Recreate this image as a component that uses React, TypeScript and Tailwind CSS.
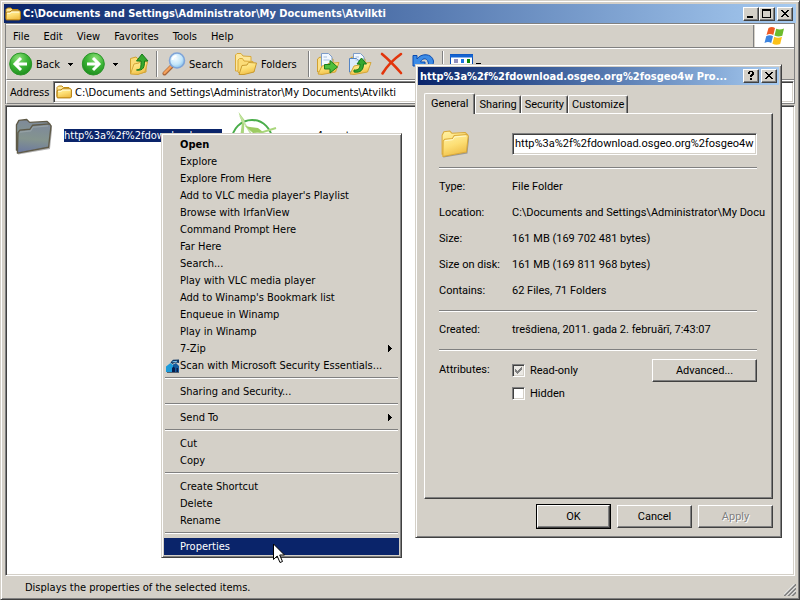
import { ReactNode } from 'react';
import { clsx } from 'clsx';

const tahoma = "font-['DejaVu_Sans_Condensed','Noto_Sans',sans-serif]";
const msSans = "font-[Roboto,'Liberation_Sans',sans-serif]";

const windowFrame =
  'border border-[#d4d0c8] border-r-[#404040] border-b-[#404040] shadow-[inset_1px_1px_0_#fff,inset_-1px_-1px_0_#808080] bg-[#d4d0c8]';
const raised =
  'border border-white border-r-[#404040] border-b-[#404040] shadow-[inset_-1px_-1px_0_#808080] bg-[#d4d0c8]';
const sunken =
  'border border-[#808080] border-r-white border-b-white shadow-[inset_1px_1px_0_#404040,inset_-1px_-1px_0_#d4d0c8]';

const menus = ['File', 'Edit', 'View', 'Favorites', 'Tools', 'Help'];

interface MenuEntry {
  label: string;
  bold?: boolean;
  submenu?: boolean;
  shield?: boolean;
  active?: boolean;
}

const contextGroups: MenuEntry[][] = [
  [
    { label: 'Open', bold: true },
    { label: 'Explore' },
    { label: 'Explore From Here' },
    { label: "Add to VLC media player's Playlist" },
    { label: 'Browse with IrfanView' },
    { label: 'Command Prompt Here' },
    { label: 'Far Here' },
    { label: 'Search...' },
    { label: 'Play with VLC media player' },
    { label: "Add to Winamp's Bookmark list" },
    { label: 'Enqueue in Winamp' },
    { label: 'Play in Winamp' },
    { label: '7-Zip', submenu: true },
    { label: 'Scan with Microsoft Security Essentials...', shield: true },
  ],
  [{ label: 'Sharing and Security...' }],
  [{ label: 'Send To', submenu: true }],
  [{ label: 'Cut' }, { label: 'Copy' }],
  [{ label: 'Create Shortcut' }, { label: 'Delete' }, { label: 'Rename' }],
  [{ label: 'Properties', active: true }],
];

const details = [
  ['Type:', 'File Folder'],
  ['Location:', 'C:\\Documents and Settings\\Administrator\\My Docu'],
  ['Size:', '161 MB (169 702 481 bytes)'],
  ['Size on disk:', '161 MB (169 811 968 bytes)'],
  ['Contains:', '62 Files, 71 Folders'],
];

/* ---------- icons ---------- */

function Gradients() {
  return (
    <svg className="absolute size-0" aria-hidden="true">
      <defs>
        <linearGradient id="gold" x1="0" y1="0" x2="0.4" y2="1">
          <stop offset="0" stopColor="#fff3a8" />
          <stop offset="0.55" stopColor="#fddf75" />
          <stop offset="1" stopColor="#f0c04a" />
        </linearGradient>
        <linearGradient id="dim" x1="0.2" y1="0" x2="0.1" y2="1">
          <stop offset="0" stopColor="#7e8a9a" />
          <stop offset="0.5" stopColor="#84948e" />
          <stop offset="1" stopColor="#6b78a0" />
        </linearGradient>
        <radialGradient id="green" cx="0.4" cy="0.25" r="0.8">
          <stop offset="0" stopColor="#8fe07a" />
          <stop offset="0.5" stopColor="#3db536" />
          <stop offset="1" stopColor="#1b8a1c" />
        </radialGradient>
        <radialGradient id="lens" cx="0.4" cy="0.35" r="0.7">
          <stop offset="0" stopColor="#f4fcff" />
          <stop offset="0.6" stopColor="#c3e6fa" />
          <stop offset="1" stopColor="#7fbdea" />
        </radialGradient>
      </defs>
    </svg>
  );
}

function SmallFolder() {
  return (
    <svg width="16" height="16" viewBox="0 0 16 16" className="shrink-0">
      <path d="M1 12.5V3.5L2.5 2H6l1.5 1.5H13l1 1V6" fill="#ffe99a" stroke="#c08a10" />
      <path d="M1 13.5 1.2 7l1-1H5l1-1.2h8.5l.9 1V13l-.9.9H1.8z" fill="url(#gold)" stroke="#b37a08" />
      <path d="M2.2 7.3h3.2l1-1.2h7.8" fill="none" stroke="#fffbe0" />
    </svg>
  );
}

// large folder, used both for the dialog and for the dimmed selected item
function LargeFolder({ size, dim = false, className }: { size: number; dim?: boolean; className?: string }) {
  const fill = dim ? 'url(#dim)' : 'url(#gold)';
  const line = dim ? '#5f5a48' : '#d9a93a';
  return (
    <svg width={size} height={size} viewBox="0 0 38 38" className={clsx('shrink-0', className)}>
      <path d="M3 36.500 35 31 37.500 8" fill="none" stroke="#555" strokeOpacity="0.45" strokeWidth="2" />
      <path
        d="M1.500 33V7L4 2.500 12 1.500l3 3L33 3.500 35.500 6v6z"
        fill={fill}
        stroke={line}
        strokeWidth="1.4"
        strokeLinejoin="round"
      />
      <path
        d="M2.500 36 3 15l2-2.500 10.500-1 2.500-4L35.500 6 37 8l-2.500 22z"
        fill={fill}
        stroke={line}
        strokeWidth="1.4"
        strokeLinejoin="round"
      />
      <path d="M5 14.500 16 13.200l2.500-3.700 15.500-1.400" fill="none" stroke={dim ? '#95a1a5' : '#fffbd2'} strokeWidth="1.200" />
    </svg>
  );
}

function RoundArrow({ flip = false }: { flip?: boolean }) {
  return (
    <svg width="24" height="24" viewBox="0 0 24 24" className={clsx('shrink-0', flip && '-scale-x-100')}>
      <circle cx="11.7" cy="12" r="11" fill="url(#green)" stroke="#2a9428" />
      <path d="M12 6 6 12l6 6M7 12h11" fill="none" stroke="#fff" strokeWidth="3" />
    </svg>
  );
}

function UpFolder() {
  return (
    <svg width="22" height="24" viewBox="0 0 22 24" className="shrink-0">
      <path d="M1.5 21V6.5L7 5l2 2 8 1v12l-9 2z" fill="#fbdc78" stroke="#d0a030" />
      <path d="M1.5 22 5 12l5-1 1-2 7.5 1L16 20l-7 2.5z" fill="url(#gold)" stroke="#d3a63a" />
      <path d="M7.5 18c5 0 4.5-4 4.5-9H7.5L13 2l6 7h-3.5c0 6-1 10-8 9z" fill="#35a82f" stroke="#157a18" />
    </svg>
  );
}

function Magnifier() {
  return (
    <svg width="24" height="24" viewBox="0 0 24 24" className="shrink-0">
      <path d="m10 14-7.5 7.5" stroke="#a8653a" strokeWidth="4" strokeLinecap="round" />
      <path d="m9.5 14-7 7" stroke="#f5a25c" strokeWidth="2.4" strokeLinecap="round" />
      <path d="m11 12-2 2" stroke="#7793c6" strokeWidth="3" />
      <circle cx="15" cy="8.5" r="7.5" fill="url(#lens)" stroke="#7fa4d8" strokeWidth="1.6" />
      <path d="M10.5 8a4.5 4.5 0 0 1 4-4" fill="none" stroke="#fff" strokeWidth="2" />
    </svg>
  );
}

function FoldersIcon() {
  return (
    <svg width="24" height="24" viewBox="0 0 24 24" className="shrink-0">
      <path d="M1.5 19V3L3 1.5h4L9 4l8 .5V15l-13 4z" fill="#fde79a" stroke="#d9a93a" />
      <path d="M4 20V8l1.5-1.5h3L10 9l9 .5V19l-13 3z" fill="#fbdc78" stroke="#d9a93a" />
      <path d="m5 22.500 3-9 5-.5 1.500-2.500 8 .5-2.500 9L10 22.500z" fill="url(#gold)" stroke="#c99a2e" />
    </svg>
  );
}

function TransferFolder({ copy = false }: { copy?: boolean }) {
  return (
    <svg width="24" height="24" viewBox="0 0 24 24" className="shrink-0">
      <path d="M1.5 20V7L4 5l3 1 10 1v11z" fill="#fbe08a" stroke="#d0a030" />
      <path d="M5.5 18V1.5h7L16 5v13z" fill="#f2f8ff" stroke="#7d9cc8" />
      {copy && <path d="M1.5 20V6.5h7L11 9v11z" fill="#dcebfb" stroke="#5484c4" />}
      <path d="M7.5 5H11M7.5 8h6" stroke="#a7bfe0" />
      <path d="m2 22 4-8 5-1 1-1.5 11-1L19.5 20 6 22.5z" fill="url(#gold)" stroke="#d3a63a" />
      {copy ? (
        <path d="M6 18c5 .5 6-2 6-6H9l4.5-6 5 6h-3c0 6-3 9-9.500 8z" fill="#35a82f" stroke="#157a18" />
      ) : (
        <path d="M8.5 12.5H14v-4l7.5 6.5-7.5 6v-4H8.5z" fill="#4fbf3c" stroke="#1c7d1c" />
      )}
    </svg>
  );
}

function DeleteIcon() {
  return (
    <svg width="24" height="24" viewBox="0 0 24 24" className="shrink-0">
      <path d="M2 2c6 5 12 11 19 19M21 2C14 7 7 14 2.5 21.5" fill="none" stroke="#e2350c" strokeWidth="2.6" strokeLinecap="round" />
    </svg>
  );
}

function UndoIcon() {
  return (
    <svg width="24" height="24" viewBox="0 0 24 24" className="shrink-0">
      <path d="M1 3.500h4V7C9 1 20 1 21.500 9c0 6-4 10-10 12 3-3 5-5 5-9C16 6 11 5 8.500 10H13v4H1z" fill="#3b8be6" stroke="#0a4bb0" />
    </svg>
  );
}

function ViewsIcon() {
  return (
    <svg width="24" height="24" viewBox="0 0 24 24" className="shrink-0">
      <rect x="0.5" y="2.5" width="22" height="19" fill="#fff" stroke="#0b50b8" />
      <path d="M0 4h23" stroke="#1464d2" strokeWidth="3" />
      <path d="M4 9h4M4 16h4" stroke="#9292c0" strokeWidth="4" />
      <path d="M11 9h3M11 16h3" stroke="#1c74e0" strokeWidth="4" />
      <path d="M17 9h3M17 16h3" stroke="#0a8a0a" strokeWidth="4" />
    </svg>
  );
}

function WindowsFlag() {
  return (
    <svg width="22" height="20" viewBox="0 0 22 20">
      <path d="M4.5 2C7 .5 9 .8 11 2L9.3 9C7 7.8 5 7.8 2.500 9z" fill="#ee5a24" />
      <path d="M12.2 2.800c2.500 1.200 5 1 7.800-.3L18.300 9.700c-2.800 1.200-5 1-7.800-.2z" fill="#6cbb2c" />
      <path d="M2.2 10.200C4.700 9 6.800 9 9 10.200L7.200 17C5 15.800 3 15.800.5 17z" fill="#3c84e0" />
      <path d="M10.2 10.800c2.600 1.200 5 1.200 7.800 0L16.200 18c-2.700 1.200-5.200 1-7.800-.2z" fill="#fbc11a" />
    </svg>
  );
}

function ShieldHouse() {
  return (
    <svg width="14" height="14" viewBox="0 0 14 14">
      <path d="M0 13V7.500L4.500 4 7 6v7z" fill="#1d9ad8" />
      <path d="M7 13V5.500L10 4l3 3v6z" fill="#145a9c" />
      <path d="M4.500 3.500 7 .8 13 .5V4L9 3.500 6.500 5z" fill="#0f3765" />
      <path d="M6.500 2.800 11 2.300" stroke="#7cc4ee" />
      <path d="M6 13V9l1.500-1.500L9 9v4zM10.500 13V9h1.500v4z" fill="#0a1c4a" />
      <path d="M1 13.500h12" stroke="#55616e" />
    </svg>
  );
}

// green compass rose of the installer file
function OsgeoLogo() {
  return (
    <svg width="48" height="48" viewBox="0 0 48 48" className="shrink-0">
      <circle cx="21" cy="29" r="20" fill="none" stroke="#4aad4a" strokeWidth="2" />
      <path d="M7.500 1 13.500 9l-1 20L8 34l3-22z" fill="#a9d67c" />
      <path d="M9 5 22 26" stroke="#c3e3a2" strokeWidth="1.5" />
      <path d="m14 15 5 1 8 1 5 4-10 1z" fill="#9ccb62" />
      <path d="M45 17 22 24" stroke="#a9d67c" strokeWidth="2" />
    </svg>
  );
}

function DownArrow() {
  return (
    <svg width="5" height="3" viewBox="0 0 5 3" className="shrink-0" shapeRendering="crispEdges">
      <path d="M0 0h5v1H4v1H3v1H2V2H1V1H0z" />
    </svg>
  );
}

function Pointer() {
  return (
    <svg width="12" height="21" viewBox="0 0 12 21">
      <path d="M.5 1v15.5L4.200 13 7 19.500l2.500-1L6.700 12H11.500z" fill="#fff" stroke="#000" />
    </svg>
  );
}

/* ---------- small controls ---------- */

function CaptionButton({ label, children }: { label: string; children: ReactNode }) {
  return (
    <button aria-label={label} className={clsx('flex h-3.5 w-4 items-center justify-center', raised)}>
      <svg width="12" height="10" viewBox="0 0 12 10" shapeRendering="crispEdges" className="shrink-0">
        {children}
      </svg>
    </button>
  );
}

const closeGlyph = <path d="M2 1h2v1h1v1h2V2h1V1h2v1H9v1H8v1H7v1h1v1h1v1h1v1H8V7H7V6H5v1H4v1H2V7h1V6h1V5h1V4H4V3H3V2H2z" />;

function Groove({ className }: { className?: string }) {
  return <div className={clsx('h-0.5 border-t border-b border-t-[#808080] border-b-white', className)} />;
}

function ToolSeparator({ className }: { className?: string }) {
  return <div className={clsx('h-[26px] w-0.5 shrink-0 border-l border-r border-l-[#808080] border-r-white', className)} />;
}

function ToolButton({ className, children, label }: { className: string; children: ReactNode; label: string }) {
  return (
    <button aria-label={label} className={clsx('flex shrink-0 items-center', className)}>
      {children}
    </button>
  );
}

function DialogButton({ children, className, disabled }: { children: ReactNode; className?: string; disabled?: boolean }) {
  return (
    <button
      disabled={disabled}
      className={clsx(
        'flex h-[23px] items-center justify-center',
        raised,
        disabled && 'text-[#808080] [text-shadow:1px_1px_0_#fff]',
        className
      )}
    >
      {children}
    </button>
  );
}

/* ---------- overlays ---------- */

function ContextMenu() {
  return (
    <div role="menu" className={clsx('absolute top-[132px] left-40 w-[241px] p-0.5', windowFrame)}>
      {contextGroups.map((group, i) => (
        <div key={group[0].label}>
          {i > 0 && <Groove className="mx-px mt-[3px] mb-1" />}
          {group.map((item) => (
            <button
              key={item.label}
              role="menuitem"
              className={clsx(
                'relative flex h-[17px] w-full items-center pr-[7px] pl-4 text-left whitespace-nowrap',
                item.bold && 'font-bold',
                item.active && 'bg-[#0a246a] text-white'
              )}
            >
              {item.shield && (
                <span className="absolute top-0.5 left-0.5">
                  <ShieldHouse />
                </span>
              )}
              {item.label}
              {item.submenu && (
                <svg width="4" height="7" viewBox="0 0 4 7" className="ml-auto" shapeRendering="crispEdges">
                  <path d="M0 0h1v1h1v1h1v1h1v1H3v1H2v1H1v1H0z" />
                </svg>
              )}
            </button>
          ))}
        </div>
      ))}
    </div>
  );
}

function Tab({ label, selected = false }: { label: string; selected?: boolean }) {
  return (
    <button
      role="tab"
      aria-selected={selected}
      className={clsx(
        'rounded-t-[2px] border border-b-0 border-white border-r-[#404040] bg-[#d4d0c8] shadow-[inset_-1px_0_0_#808080]',
        selected ? 'z-10 -mb-px h-[21px] px-1.5 pb-0.5' : 'h-[18px] px-[3px]'
      )}
    >
      {label}
    </button>
  );
}

function PropertiesDialog() {
  return (
    <div role="dialog" aria-label="Properties" className={clsx('absolute top-[63px] left-[414px] flex h-[474px] w-[367px] flex-col p-0.5', windowFrame)}>
      <div
        className={clsx(
          'flex h-[18px] shrink-0 items-center bg-linear-to-r from-[#0a246a] to-[#a6caf0] pr-0.5 pl-0.5 font-bold whitespace-nowrap text-white',
          tahoma
        )}
      >
        http%3a%2f%2fdownload.osgeo.org%2fosgeo4w Pro...
        <div className="ml-auto flex gap-0.5">
          <CaptionButton label="Help">
            <path d="M3 1h1V0h4v1h1v3H8v1H7v1H5V4h1V3h1V1H5v2H3zM5 7h2v2H5z" />
          </CaptionButton>
          <CaptionButton label="Close">{closeGlyph}</CaptionButton>
        </div>
      </div>

      <div className={clsx('flex min-h-0 flex-1 flex-col px-1.5 pt-2 pb-[7px]', msSans)}>
        <div role="tablist" className="flex items-end">
          <Tab label="General" selected />
          <Tab label="Sharing" />
          <Tab label="Security" />
          <Tab label="Customize" />
        </div>

        <div className={clsx('flex-1 pt-[19px] pr-[15px] pl-3.5', raised)}>
          <div className="flex h-[22px] items-center">
            <div className="w-[73px] shrink-0 pl-0.5">
              <LargeFolder size={28} />
            </div>
            <input
              aria-label="Folder name"
              defaultValue="http%3a%2f%2fdownload.osgeo.org%2fosgeo4w"
              className={clsx('h-[22px] min-w-0 flex-1 bg-white px-0.5 pb-0.5 outline-none', sunken)}
            />
          </div>
          <Groove className="mt-3 mb-[5px]" />
          <dl>
            {details.map(([term, value]) => (
              <div key={term} className="flex leading-[26px] whitespace-nowrap">
                <dt className="w-[73px] shrink-0">{term}</dt>
                <dd>{value}</dd>
              </div>
            ))}
          </dl>
          <Groove className="mt-1.5 mb-[5px]" />
          <dl className="flex leading-[26px] whitespace-nowrap">
            <dt className="w-[73px] shrink-0">Created:</dt>
            <dd>trešdiena, 2011. gada 2. februārī, 7:43:07</dd>
          </dl>
          <Groove className="mt-1.5 mb-2" />
          <div className="flex">
            <span className="w-[73px] shrink-0 leading-[22px]">Attributes:</span>
            <div className="flex flex-col">
              <label className="flex h-[23px] items-center gap-[5px]">
                <span className="relative flex">
                  <input
                    type="checkbox"
                    defaultChecked
                    className={clsx('size-[13px] appearance-none bg-[#eae8e4]', sunken)}
                  />
                  <svg width="7" height="7" viewBox="0 0 7 7" shapeRendering="crispEdges" className="pointer-events-none absolute top-[3px] left-[3px]">
                    <path d="M0 2h1v1h1v1h1V3h1V2h1V1h1V0h1v3H6v1H5v1H4v1H3v1H2V6H1V5H0z" fill="#808080" />
                  </svg>
                </span>
                Read-only
              </label>
              <label className="flex h-[23px] items-center gap-[5px]">
                <input type="checkbox" className={clsx('size-[13px] appearance-none bg-white', sunken)} />
                Hidden
              </label>
            </div>
            <DialogButton className="ml-auto w-[105px]">Advanced...</DialogButton>
          </div>
        </div>

        <div className="mt-1.5 flex justify-end gap-1.5">
          <div className="-my-px bg-black p-px">
            <DialogButton className="w-[73px]">OK</DialogButton>
          </div>
          <DialogButton className="w-[75px]">Cancel</DialogButton>
          <DialogButton className="w-[75px]" disabled>
            Apply
          </DialogButton>
        </div>
      </div>
    </div>
  );
}

/* ---------- explorer window ---------- */

export default function App() {
  return (
    <div className={clsx('relative flex h-screen flex-col overflow-hidden p-[3px] text-[11px] leading-[13px] text-black', tahoma, windowFrame)}>
      <Gradients />

      <div className="flex h-[19px] shrink-0 items-center gap-0.5 bg-linear-to-r from-[#0a246a] to-[#a6caf0] pr-[3px] pl-px font-bold whitespace-nowrap text-white">
        <SmallFolder />
        C:\Documents and Settings\Administrator\My Documents\Atvilkti
        <div className="ml-auto flex">
          <CaptionButton label="Minimize">
            <path d="M2 7h6v2H2z" />
          </CaptionButton>
          <CaptionButton label="Maximize">
            <path d="M1 0h9v9H1zM2 2v6h7V2z" fillRule="evenodd" />
          </CaptionButton>
          <span className="w-0.5" />
          <CaptionButton label="Close">{closeGlyph}</CaptionButton>
        </div>
      </div>

      <div className="mx-px shrink-0 border border-[#808080] border-b-0">
        <div className="flex h-6 border-t border-b border-t-white border-b-[#808080]">
          <div className="flex flex-1 items-center border-r border-r-[#808080]">
            {menus.map((m) => (
              <button key={m} className="px-[7px]">
                {m}
              </button>
            ))}
          </div>
          <div className="ml-px flex w-[39px] items-center justify-center bg-white">
            <WindowsFlag />
          </div>
        </div>

        <div className="flex h-8 items-center border-t border-b border-l border-white border-b-[#808080] pl-0.5">
          <ToolButton label="Back" className="w-[72px] pr-2">
            <RoundArrow />
            <span className="ml-[3px]">Back</span>
            <span className="ml-auto">
              <DownArrow />
            </span>
          </ToolButton>
          <ToolButton label="Forward" className="w-12 gap-2">
            <RoundArrow flip />
            <DownArrow />
          </ToolButton>
          <ToolButton label="Up" className="w-[27px]">
            <UpFolder />
          </ToolButton>
          <ToolSeparator className="mr-1" />
          <ToolButton label="Search" className="w-[72px] gap-[3px]">
            <Magnifier />
            Search
          </ToolButton>
          <ToolButton label="Folders" className="w-[74px] gap-[3px]">
            <FoldersIcon />
            Folders
          </ToolButton>
          <ToolSeparator className="mr-1.5" />
          <ToolButton label="Move to" className="w-8">
            <TransferFolder />
          </ToolButton>
          <ToolButton label="Copy to" className="w-8">
            <TransferFolder copy />
          </ToolButton>
          <ToolButton label="Delete" className="w-8">
            <DeleteIcon />
          </ToolButton>
          <ToolButton label="Undo" className="w-[30px]">
            <UndoIcon />
          </ToolButton>
          <ToolSeparator className="mr-1.5" />
          <ToolButton label="Views" className="gap-0.5">
            <ViewsIcon />
            <DownArrow />
          </ToolButton>
        </div>

        <div className="flex h-6 items-center gap-[3px] border-t border-b border-l border-white border-b-[#808080] pl-[3px]">
          <label htmlFor="address" className="w-10">
            Address
          </label>
          <div className={clsx('flex h-[22px] flex-1 items-center gap-[3px] bg-white pl-0.5', sunken)}>
            <SmallFolder />
            <input
              id="address"
              defaultValue="C:\Documents and Settings\Administrator\My Documents\Atvilkti"
              className="min-w-0 flex-1 outline-none"
            />
          </div>
        </div>
      </div>

      <main className={clsx('mx-px mt-px flex min-h-0 flex-1 items-start bg-white pt-[5px] pl-[9px]', sunken)}>
        <div className="flex h-12 w-[216px] items-center gap-3">
          <LargeFolder size={37} dim className="mt-[3px]" />
          <span className="w-[158px] truncate bg-[#0a246a] text-white">http%3a%2f%2fdownload.osgeo.org%2fosgeo4w</span>
        </div>
        <div className="flex items-center gap-2">
          <OsgeoLogo />
          <span>osgeo4w-setup</span>
        </div>
      </main>

      <footer className="flex h-5 shrink-0 items-center pt-0.5 pl-[21px]">
        Displays the properties of the selected items.
        <svg width="12" height="12" viewBox="0 0 12 12" className="ml-auto self-end">
          <path d="M0 12 12 0M4 12l8-8M8 12l4-4" stroke="#808080" strokeWidth="2" />
          <path d="M-1 11.5 11.5-1M3 11.5 12 2.5M7 11.5l5-5" stroke="#fff" />
        </svg>
      </footer>

      <ContextMenu />
      <PropertiesDialog />
      <div className="pointer-events-none absolute top-[542px] left-[272px]">
        <Pointer />
      </div>
    </div>
  );
}
